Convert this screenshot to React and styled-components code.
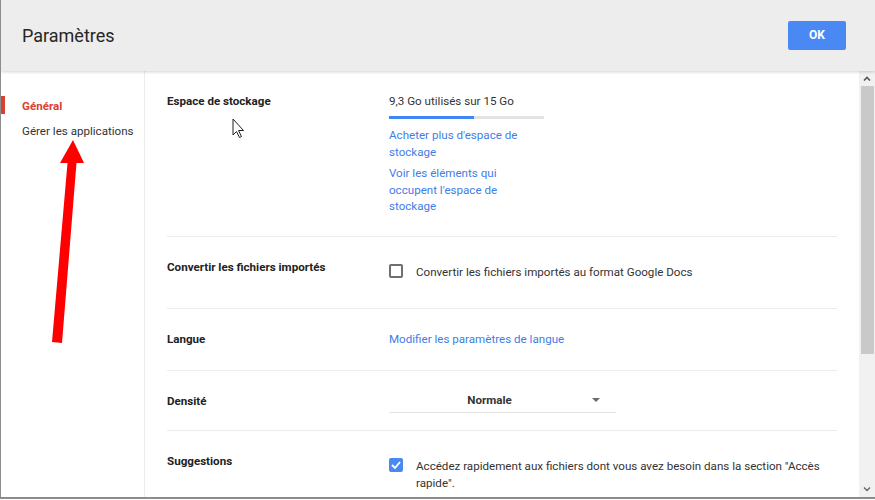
import React from "react";
import styled, { createGlobalStyle } from "styled-components";

const GlobalStyle = createGlobalStyle`
  html, body {
    margin: 0;
    padding: 0;
    background: #fff;
    font-family: Roboto, "Liberation Sans", Arial, sans-serif;
    -webkit-font-smoothing: antialiased;
  }
`;

const Frame = styled.div`
  position: relative;
  width: 875px;
  height: 499px;
  border-left: 1px solid #8c8c8c;
  border-bottom: 2px solid #8c8c8c;
  box-sizing: border-box;
  display: flex;
  flex-direction: column;
  overflow: hidden;
  background: #fff;
`;

const Header = styled.header`
  height: 71px;
  flex-shrink: 0;
  background: #ededed;
  box-shadow: 0 1px 3px rgba(0, 0, 0, 0.18);
  display: flex;
  align-items: center;
  justify-content: space-between;
  padding: 0 29px 0 21px;
  position: relative;
  z-index: 1;
`;

const Title = styled.h1`
  margin: 0;
  font-size: 18px;
  font-weight: 400;
  color: #262626;
`;

const OkButton = styled.button`
  width: 58px;
  height: 29px;
  border: none;
  border-radius: 2px;
  background: #4a89f3;
  color: #fff;
  font-family: inherit;
  font-size: 12px;
  font-weight: 700;
  margin-bottom: 1px;
`;

const Body = styled.div`
  flex: 1;
  display: flex;
  min-height: 0;
`;

const Sidebar = styled.nav`
  width: 143px;
  flex-shrink: 0;
  border-right: 1px solid #ececec;
  padding-top: 26px;
  display: flex;
  flex-direction: column;
  gap: 7px;
`;

const NavItem = styled.div`
  position: relative;
  height: 18px;
  line-height: 18px;
  padding-left: 21px;
  font-size: 11.6px;
  font-weight: ${(p) => (p.$active ? 700 : 400)};
  color: ${(p) => (p.$active ? "#d8412f" : "#333")};

  &::before {
    content: "";
    display: ${(p) => (p.$active ? "block" : "none")};
    position: absolute;
    left: 0;
    top: -1px;
    width: 4px;
    height: 18px;
    background: #d8412f;
  }
`;

const Main = styled.main`
  flex: 1;
  padding: 0 22px;
  overflow: hidden;
`;

const Row = styled.section`
  display: grid;
  grid-template-columns: 222px 1fr;
  align-items: start;
  padding-top: 22px;
  height: ${(p) => p.$h}px;
  box-sizing: border-box;
  border-bottom: ${(p) => (p.$last ? "none" : "1px solid #ececec")};
`;

const Label = styled.div`
  font-size: 11.6px;
  line-height: 17px;
  font-weight: 700;
  color: #222;
`;

const Value = styled.div`
  font-size: 11.6px;
  line-height: 16px;
  color: #333;
  padding-top: ${(p) => p.$pt || 0}px;
`;

const Usage = styled.div`
  line-height: 17px;
`;

const Bar = styled.div`
  width: 155px;
  height: 3px;
  margin-top: 6px;
  background: #e3e3e3;
`;

const BarFill = styled.div`
  height: 100%;
  background: #4285f4;
`;

const LinkBlock = styled.div`
  width: 156px;
  display: flex;
  flex-direction: column;
  gap: 5px;
  margin-top: 8px;
`;

const Link = styled.a`
  color: #3f7de6;
  font-size: 11.6px;
  line-height: 16.5px;
  text-decoration: none;
`;

const CheckRow = styled.label`
  display: flex;
  align-items: flex-start;
  gap: 13px;
  line-height: 17px;
  max-width: 440px;
`;

const Box = styled.span`
  flex-shrink: 0;
  width: 14px;
  height: 14px;
  box-sizing: border-box;
  border-radius: 2px;
  border: ${(p) => (p.$checked ? "none" : "2px solid #6f6f6f")};
  background: ${(p) => (p.$checked ? "#4a89f3" : "#fff")};
  display: flex;
  align-items: center;
  justify-content: center;
`;

const Select = styled.div`
  width: 227px;
  height: 19px;
  border-bottom: 1px solid #e3e3e3;
  display: flex;
  align-items: flex-start;
`;

const SelectText = styled.span`
  flex: 1;
  text-align: center;
  font-weight: 700;
  color: #333;
  line-height: 14px;
  padding-right: 2px;
`;

const Caret = styled.span`
  width: 0;
  height: 0;
  border-left: 4px solid transparent;
  border-right: 4px solid transparent;
  border-top: 4px solid #6a6a6a;
  margin: 5px 16px 0 0;
`;

const Scrollbar = styled.div`
  width: 16px;
  flex-shrink: 0;
  background: #f1f1f1;
  display: flex;
  flex-direction: column;
  align-items: center;
`;

const ScrollArrow = styled.div`
  height: 15px;
  width: 100%;
  display: flex;
  align-items: center;
  justify-content: center;
`;

const Thumb = styled.div`
  width: 13px;
  height: 268px;
  background: #c9c9c9;
`;

const Spacer = styled.div`
  flex: 1;
`;

const Overlay = styled.svg`
  position: absolute;
  left: 0;
  top: 0;
  pointer-events: none;
`;

export default function App() {
  return (
    <>
      <GlobalStyle />
      <Frame>
        <Header>
          <Title>Paramètres</Title>
          <OkButton>OK</OkButton>
        </Header>
        <Body>
          <Sidebar>
            <NavItem $active>Général</NavItem>
            <NavItem>Gérer les applications</NavItem>
          </Sidebar>
          <Main>
            <Row $h={166}>
              <Label>Espace de stockage</Label>
              <Value>
                <Usage>9,3 Go utilisés sur 15 Go</Usage>
                <Bar>
                  <BarFill style={{ width: `${(9.3 / 15) * 100 * 0.88}%` }} />
                </Bar>
                <LinkBlock>
                  <Link>Acheter plus d'espace de stockage</Link>
                  <Link>Voir les éléments qui occupent l'espace de stockage</Link>
                </LinkBlock>
              </Value>
            </Row>
            <Row $h={72}>
              <Label>Convertir les fichiers importés</Label>
              <Value $pt={5}>
                <CheckRow>
                  <Box />
                  <span>Convertir les fichiers importés au format Google Docs</span>
                </CheckRow>
              </Value>
            </Row>
            <Row $h={62}>
              <Label>Langue</Label>
              <Value>
                <Link>Modifier les paramètres de langue</Link>
              </Value>
            </Row>
            <Row $h={60}>
              <Label>Densité</Label>
              <Value>
                <Select>
                  <SelectText>Normale</SelectText>
                  <Caret />
                </Select>
              </Value>
            </Row>
            <Row $h={80} $last>
              <Label>Suggestions</Label>
              <Value $pt={5}>
                <CheckRow>
                  <Box $checked>
                    <svg width="10" height="8" viewBox="0 0 10 8">
                      <polyline points="1,4 4,7 9,1" fill="none" stroke="#fff" strokeWidth="1.8" />
                    </svg>
                  </Box>
                  <span>
                    Accédez rapidement aux fichiers dont vous avez besoin dans la section "Accès rapide".
                  </span>
                </CheckRow>
              </Value>
            </Row>
          </Main>
          <Scrollbar>
            <ScrollArrow>
              <svg width="8" height="5" viewBox="0 0 8 5">
                <polyline points="1,4.5 4,1.5 7,4.5" fill="none" stroke="#555" strokeWidth="1.6" />
              </svg>
            </ScrollArrow>
            <Thumb />
            <Spacer />
            <ScrollArrow>
              <svg width="8" height="5" viewBox="0 0 8 5">
                <polyline points="1,0.5 4,3.5 7,0.5" fill="none" stroke="#666" strokeWidth="1.4" />
              </svg>
            </ScrollArrow>
          </Scrollbar>
        </Body>
        <Overlay width="875" height="499" viewBox="0 0 875 499">
          <polygon
            points="51,342 66.5,163 59,163 72,140 83,163 75.5,163 61,343"
            fill="#ff0000"
          />
          <path
            d="M232 119 L232 135 L235.5 131.5 L238.5 137.5 L240.5 136.5 L237.5 130.5 L242.5 130.5 Z"
            fill="#fff"
            stroke="#222"
            strokeWidth="1"
            strokeLinejoin="round"
          />
        </Overlay>
      </Frame>
    </>
  );
}
